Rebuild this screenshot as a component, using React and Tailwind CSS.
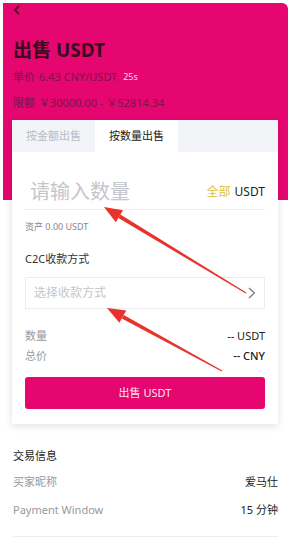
import { useState } from "react";

const font = { fontFamily: '"Noto Sans", "Noto Sans CJK SC", sans-serif' };

function Arrows() {
  // red annotation arrows drawn over the form
  return (
    <svg className="absolute left-0 top-0 pointer-events-none" width="297" height="540">
      <polygon points="104,207 115.8,222.3 123,210.3" fill="#e8322c" />
      <polygon points="118.4,218 120.4,214.6 246.3,292.5 245.7,293.5" fill="#e8322c" />
      <polygon points="107,308 119.4,322.8 126.2,310.6" fill="#e8322c" />
      <polygon points="121.8,318.5 123.8,314.9 222.3,370.5 221.7,371.5" fill="#e8322c" />
    </svg>
  );
}

function Row({ label, value, labelClass, valueClass, className }) {
  return (
    <div className={"flex justify-between items-center leading-[14px] text-[11px] " + className}>
      <span className={labelClass}>{label}</span>
      <span className={valueClass}>{value}</span>
    </div>
  );
}

export default function App() {
  const [tab, setTab] = useState(1);
  const [amount, setAmount] = useState("");

  return (
    <div className="relative w-[297px] h-[540px] bg-white overflow-hidden" style={font}>
      <div className="ml-[3px] mt-[3px] w-[285px] h-[197px] bg-[#e5076f] rounded-tr-[6px] px-[10px] pt-[2px]">
        <svg width="8" height="10" viewBox="0 0 8 10">
          <path d="M6 1 L2 5 L6 9" stroke="#5a0a2e" strokeWidth="2" fill="none" />
        </svg>
        <div className="mt-[23px] text-[19px] font-bold leading-[24px] text-[#3a0a1e]">出售 USDT</div>
        <div className="mt-[8px] flex items-center text-[11px] leading-[14px] text-[#80124a]">
          <span>单价</span>
          <span className="ml-[4px]">6.43 CNY/USDT</span>
          <span className="ml-[6px] text-[9px] text-[#ffd6ea]">25s</span>
        </div>
        <div className="mt-[12px] flex items-center text-[11px] leading-[14px] text-[#80124a]">
          <span>限额</span>
          <span className="ml-[4px]">￥30000.00 - ￥52814.34</span>
        </div>
      </div>

      <div className="relative mt-[-80px] ml-[12px] w-[266px] bg-white shadow-[0_2px_8px_rgba(0,0,0,0.12)] pb-[15px]">
        <div className="flex h-[32px] bg-[#f3f4f7] text-[11px]">
          <button
            onClick={() => setTab(0)}
            className={"w-[83px] flex items-center justify-center " + (tab === 0 ? "bg-white text-[#222]" : "text-[#b8bcc4]")}
          >
            按金额出售
          </button>
          <button
            onClick={() => setTab(1)}
            className={"w-[83px] flex items-center justify-center " + (tab === 1 ? "bg-white text-[#222]" : "text-[#b8bcc4]")}
          >
            按数量出售
          </button>
        </div>

        <div className="px-[13px]">
          <div className="flex items-end justify-between h-[58px] pb-[5px] border-b border-[#ececec]">
            <input
              value={amount}
              onChange={(e) => setAmount(e.target.value)}
              placeholder="请输入数量"
              className="ml-[5px] w-[150px] text-[20px] leading-[24px] outline-none placeholder:text-[#c4c6cc] text-[#222]"
            />
            <div className="text-[12px] leading-[24px]">
              <span className="text-[#e0c23a]">全部</span>
              <span className="ml-[4px] text-[#222]">USDT</span>
            </div>
          </div>

          <div className="mt-[11px] text-[9px] leading-[11px] text-[#888]">资产 0.00 USDT</div>
          <div className="mt-[20px] text-[11px] leading-[14px] text-[#333]">C2C收款方式</div>

          <div className="mt-[11px] h-[32px] border border-[#ececec] flex items-center justify-between px-[8px]">
            <span className="text-[12px] text-[#c4c6cc]">选择收款方式</span>
            <svg width="8" height="12" viewBox="0 0 8 12">
              <path d="M1 1 L6.5 6 L1 11" stroke="#777" strokeWidth="1.2" fill="none" />
            </svg>
          </div>

          <Row className="mt-[20px]" label="数量" value="-- USDT" labelClass="text-[#999]" valueClass="text-[#222]" />
          <Row className="mt-[6px]" label="总价" value="-- CNY" labelClass="text-[#999]" valueClass="text-[#222] font-medium" />

          <button className="mt-[14px] w-full h-[32px] rounded-[3px] bg-[#e5076f] text-[11px] text-[#ffe3f0]">
            出售 USDT
          </button>
        </div>
      </div>

      <div className="px-[13px] mx-0">
        <div className="mt-[25px] text-[11px] leading-[14px] text-[#222]">交易信息</div>
        <Row className="mt-[12px] pr-[6px]" label="买家昵称" value="爱马仕" labelClass="text-[#999]" valueClass="text-[#222]" />
        <Row className="mt-[14px] pr-[6px]" label="Payment Window" value="15 分钟" labelClass="text-[#999]" valueClass="text-[#222]" />
        <div className="mt-[19px] mr-[6px] border-t border-[#eeeeee]" />
      </div>

      <Arrows />
    </div>
  );
}
